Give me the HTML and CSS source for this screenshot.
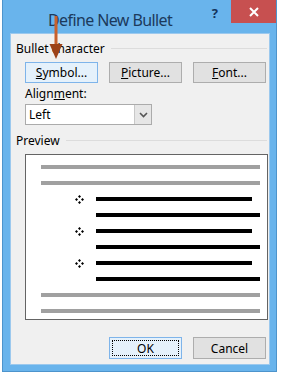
FILE: index.html
```html
<!DOCTYPE html>
<html lang="en">
  <head>
    <meta charset="UTF-8" />
    <title>Define New Bullet</title>
    <link rel="stylesheet" href="styles.css">
  </head>
  <body>
    <div class="window">
      <div class="titlebar">
        <span class="title">Define New Bullet</span>
        <span class="help">?</span>
        <span class="close">
          <svg width="10" height="10" viewBox="0 0 10 10">
            <path d="M1 1 L9 9 M9 1 L1 9" stroke="#fff" stroke-width="2" />
          </svg>
        </span>
      </div>

      <div class="content">
        <div class="group-head">
          <span>Bullet character</span>
          <span class="rule"></span>
        </div>
        <div class="btn-row">
          <button class="btn focused"><u>S</u>ymbol...</button>
          <button class="btn"><u>P</u>icture...</button>
          <button class="btn"><u>F</u>ont...</button>
        </div>

        <div class="label">Align<u>m</u>ent:</div>
        <div class="select">
          <span class="select-value">Left</span>
          <span class="select-btn">
            <svg width="9" height="6" viewBox="0 0 9 6">
              <path d="M1 1 L4.5 4.5 L8 1" fill="none" stroke="#555" stroke-width="1.6" />
            </svg>
          </span>
        </div>

        <div class="group-head preview-head">
          <span>Preview</span>
          <span class="rule"></span>
        </div>
        <div class="preview">
          <div class="row"><span class="bar gray"></span></div>
          <div class="row"><span class="bar gray"></span></div>
          <div class="row item"><span class="mark"></span><span class="bar short"></span></div>
          <div class="row item"><span class="nomark"></span><span class="bar"></span></div>
          <div class="row item"><span class="mark"></span><span class="bar short"></span></div>
          <div class="row item"><span class="nomark"></span><span class="bar"></span></div>
          <div class="row item"><span class="mark"></span><span class="bar short"></span></div>
          <div class="row item"><span class="nomark"></span><span class="bar"></span></div>
          <div class="row"><span class="bar gray"></span></div>
          <div class="row"><span class="bar gray"></span></div>
        </div>

        <div class="footer">
          <button class="btn focused"><span class="dotted">OK</span></button>
          <button class="btn">Cancel</button>
        </div>
      </div>

      <!-- callout arrow -->
      <svg class="arrow" width="16" height="44" viewBox="0 0 16 44">
        <rect x="6.5" y="0" width="3" height="30" fill="#c7602c" />
        <path d="M1.5 28 L14.5 28 L8 43 Z" fill="#9c4218" />
      </svg>
    </div>

    <script>
      // fill the preview bullets
      document.querySelectorAll(".mark").forEach((m) => {
        m.innerHTML =
          '<svg width="9" height="9" viewBox="0 0 9 9">' +
          '<path d="M4.5 0 L6 1.5 L4.5 3 L3 1.5 Z M4.5 6 L6 7.5 L4.5 9 L3 7.5 Z ' +
          'M0 4.5 L1.5 3 L3 4.5 L1.5 6 Z M6 4.5 L7.5 3 L9 4.5 L7.5 6 Z" fill="#000"/></svg>';
      });
    </script>
  </body>
</html>
```

FILE: styles.css
```css
body {
  margin: 0;
  background: #fff;
  font-family: "Segoe UI", "Noto Sans", sans-serif;
  font-size: 12px;
  color: #000;
}

.window {
  position: relative;
  width: 275px;
  height: 372px;
  margin-left: 2px;
  background: #69b4ec;
  box-sizing: border-box;
  border: 1px solid #4d94cc;
  border-top: none;
  display: flex;
  flex-direction: column;
}

.titlebar {
  height: 33px;
  display: flex;
  align-items: flex-start;
  flex-shrink: 0;
}

.title {
  margin-left: 45px;
  margin-top: 9px;
  font-size: 16px;
  letter-spacing: -0.6px;
  color: #1c3a5c;
  flex: 1;
}

.help {
  margin-top: 4px;
  margin-right: 13px;
  font-weight: bold;
  font-size: 13px;
  color: #13335a;
}

.close {
  width: 45px;
  height: 23px;
  background: #c75050;
  display: flex;
  align-items: center;
  justify-content: center;
}

.content {
  flex: 1;
  margin: 0 6px 6px 7px;
  background: #f0f0f0;
  border: 1px solid #9cc9ee;
  padding-top: 7px;
}

.group-head {
  display: flex;
  align-items: center;
  height: 14px;
  padding-left: 5px;
  padding-right: 2px;
}

.group-head .rule {
  flex: 1;
  height: 1px;
  background: #dcdcdc;
  margin-left: 6px;
}

.btn-row {
  display: flex;
  gap: 11px;
  margin: 7px 0 0 14px;
}

.btn {
  width: 73px;
  height: 21px;
  padding: 0;
  font-family: inherit;
  font-size: 12px;
  color: #000;
  background: #e1e1e1;
  border: 1px solid #adadad;
  display: flex;
  align-items: center;
  justify-content: center;
}

.btn.focused {
  background: #e5f1fb;
  border-color: #7eb4ea;
}

.label {
  margin: 3px 0 0 14px;
  height: 15px;
  line-height: 15px;
}

.select {
  margin: 3px 0 0 14px;
  width: 127px;
  height: 21px;
  box-sizing: border-box;
  border: 1px solid #ababab;
  background: #fff;
  display: flex;
}

.select-value {
  flex: 1;
  padding-left: 3px;
  line-height: 19px;
}

.select-btn {
  width: 16px;
  background: #e6e6e6;
  border-left: 1px solid #c8c8c8;
  display: flex;
  align-items: center;
  justify-content: center;
}

.preview-head {
  margin-top: 8px;
}

.preview {
  margin: 7px 0 0 14px;
  width: 243px;
  height: 166px;
  box-sizing: border-box;
  border: 1px solid #646464;
  background: #fff;
  padding-top: 4px;
}

.row {
  height: 16px;
  display: flex;
  align-items: center;
  padding-left: 15px;
}

.row.item {
  padding-left: 49px;
}

.mark,
.nomark {
  width: 21px;
  height: 9px;
  display: flex;
}

.bar {
  width: 164px;
  height: 4px;
  background: #000;
}

.bar.short {
  width: 156px;
}

.bar.gray {
  width: 219px;
  background: #a0a0a0;
}

.footer {
  display: flex;
  gap: 11px;
  margin: 17px 0 0 98px;
}

.footer .btn {
  height: 22px;
}

.dotted {
  width: 65px;
  height: 14px;
  border: 1px dotted #000;
  display: flex;
  align-items: center;
  justify-content: center;
}

.arrow {
  position: absolute;
  left: 45px;
  top: 16px;
}
```
